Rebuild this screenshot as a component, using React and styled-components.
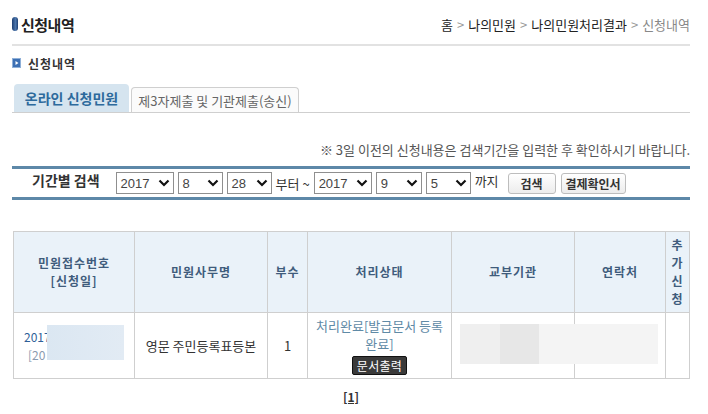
import React from 'react'
import styled, {createGlobalStyle} from 'styled-components'

const Global = createGlobalStyle`
  body {
    margin: 0;
    background: #fff;
    font-family: "Noto Sans CJK KR", "Noto Sans", sans-serif;
    font-size: 13px;
    color: #333;
  }
`

const Page = styled.div`
  width: 678px;
  padding-left: 12px;
`

const TopBar = styled.div`
  height: 46px;
  display: flex;
  align-items: center;
  justify-content: space-between;
  padding-top: 4px;
  box-sizing: border-box;
  border-bottom: 2px solid #e2e2e2;
`

const PageTitle = styled.h1`
  margin: 0;
  display: flex;
  align-items: center;
  gap: 3px;
  font-size: 15px;
  font-weight: bold;
  color: #222;
  letter-spacing: -0.5px;
`

const Pill = styled.span`
  width: 6px;
  height: 14px;
  border-radius: 3px;
  background: linear-gradient(90deg, #1d3f73, #4d77ad 60%, #1d3f73);
`

const Crumbs = styled.div`
  font-size: 13px;
  color: #222;
`

const CrumbSep = styled.span`
  color: #999;
  margin: 0 4px;
`

const CrumbLast = styled.span`
  color: #888;
`

const SectionTitle = styled.h2`
  margin: 7px 0 0;
  height: 20px;
  display: flex;
  align-items: center;
  gap: 7px;
  font-size: 12px;
  font-weight: bold;
  letter-spacing: 1px;
  color: #333;
`

const Tabs = styled.div`
  margin-top: 11px;
  height: 28px;
  display: flex;
  align-items: flex-end;
  gap: 2px;
  padding-left: 2px;
  border-bottom: 1px solid #cfcfcf;
`

const Tab = styled.div`
  box-sizing: border-box;
  display: flex;
  align-items: center;
  justify-content: center;
  width: ${p => p.$w}px;
  height: ${p => (p.$active ? 28 : 25)}px;
  border-radius: 4px 4px 0 0;
  background: ${p => (p.$active ? '#d5e4ef' : '#fbfbfb')};
  border: ${p => (p.$active ? 'none' : '1px solid #cfcfcf')};
  border-bottom: none;
  color: ${p => (p.$active ? '#2d6a9c' : '#666')};
  font-size: ${p => (p.$active ? 14 : 13)}px;
  font-weight: ${p => (p.$active ? 'bold' : 'normal')};
`

const Note = styled.p`
  margin: 28px 0 0;
  height: 18px;
  line-height: 18px;
  text-align: right;
  color: #555;
  font-size: 13px;
`

const SearchBar = styled.div`
  margin-top: 7px;
  height: 34px;
  box-sizing: border-box;
  border-top: 3px solid #5d88a8;
  border-bottom: 3px solid #5d88a8;
  display: flex;
  align-items: center;
  padding-left: 20px;
`

const SearchLabel = styled.span`
  font-size: 14px;
  font-weight: bold;
  color: #333;
  margin-right: 16px;
  padding-bottom: 6px;
`

const Select = styled.div`
  box-sizing: border-box;
  width: ${p => p.$w}px;
  height: 22px;
  border: 1px solid #8f8f8f;
  display: flex;
  align-items: center;
  justify-content: space-between;
  padding: 0 3px 0 4px;
  margin-right: 4px;
  font-family: "Liberation Sans", sans-serif;
  font-size: 13px;
  color: #444;
`

const Word = styled.span`
  font-size: 13px;
  color: #333;
  margin-right: ${p => p.$mr || 4}px;
  padding-bottom: ${p => p.$pb || 0}px;
`

const Button = styled.button`
  box-sizing: border-box;
  width: ${p => p.$w}px;
  height: 21px;
  margin-left: 5px;
  padding: 0;
  border: 1px solid #bdbdbd;
  border-radius: 3px;
  background: linear-gradient(#ffffff, #ececec);
  font-family: inherit;
  font-size: 12px;
  font-weight: bold;
  color: #333;
`

const Table = styled.table`
  margin: 31px 0 0 1px;
  width: 676px;
  border-collapse: collapse;
  table-layout: fixed;
  border: 1px solid #cfcfcf;
`

const Th = styled.th`
  height: 80px;
  padding: 0;
  border: 1px solid #cfcfcf;
  background: #eaf2f9;
  color: #3f5c7c;
  font-size: 12px;
  font-weight: bold;
  letter-spacing: 1px;
  line-height: 18px;
`

const Td = styled.td`
  position: relative;
  height: 65px;
  padding: 0 4px;
  border: 1px solid #cfcfcf;
  text-align: ${p => p.$align || 'center'};
  font-size: 13px;
  color: #333;
  line-height: 18px;
`

const Receipt = styled.div`
  font-size: 12px;
  color: ${p => p.$muted ? '#8a9bb0' : '#2f5f98'};
  padding-left: ${p => p.$indent || 6}px;
`

const Mask = styled.div`
  position: absolute;
  left: ${p => p.$l}px;
  top: ${p => p.$t}px;
  width: ${p => p.$w}px;
  height: ${p => p.$h}px;
  background: ${p => p.$bg};
`

const Status = styled.div`
  color: #5f8aa6;
`

const PrintButton = styled.span`
  display: inline-block;
  margin-top: 3px;
  padding: 0 4px;
  height: 17px;
  line-height: 17px;
  background: #3a3a3a;
  border: 1px solid #111;
  border-radius: 2px;
  color: #fff;
  font-size: 12px;
  letter-spacing: 0.3px;
`

const Paging = styled.div`
  width: 678px;
  margin-top: 9px;
  text-align: center;
  font-weight: bold;
  text-decoration: underline;
  font-size: 12px;
  color: #333;
`

const Chevron = () => (
  <svg width="12" height="8" viewBox="0 0 12 8">
    <polyline points="1.5,1.5 6,6 10.5,1.5" fill="none" stroke="#111" strokeWidth="2.2" />
  </svg>
)

const SectionIcon = () => (
  <svg width="9" height="10" viewBox="0 0 9 10">
    <rect x="0.5" y="0.5" width="8" height="9" fill="#3d70b4" stroke="#8fb0d8" />
    <polygon points="3.5,3 6.5,5 3.5,7" fill="#fff" />
  </svg>
)

const Dropdown = ({w, value}) => (
  <Select $w={w}>
    <span>{value}</span>
    <Chevron />
  </Select>
)

const App = () => {
  return (
    <Page>
      <Global />
      <TopBar>
        <PageTitle><Pill />신청내역</PageTitle>
        <Crumbs>
          홈<CrumbSep>&gt;</CrumbSep>나의민원<CrumbSep>&gt;</CrumbSep>나의민원처리결과<CrumbSep>&gt;</CrumbSep><CrumbLast>신청내역</CrumbLast>
        </Crumbs>
      </TopBar>

      <SectionTitle><SectionIcon />신청내역</SectionTitle>

      <Tabs>
        <Tab $active $w={115}>온라인 신청민원</Tab>
        <Tab $w={168}>제3자제출 및 기관제출(송신)</Tab>
      </Tabs>

      <Note>※ 3일 이전의 신청내용은 검색기간을 입력한 후 확인하시기 바랍니다.</Note>

      <SearchBar>
        <SearchLabel>기간별 검색</SearchLabel>
        <Dropdown w={58} value="2017" />
        <Dropdown w={45} value="8" />
        <Dropdown w={45} value="28" />
        <Word>부터 ~</Word>
        <Dropdown w={58} value="2017" />
        <Dropdown w={46} value="9" />
        <Dropdown w={45} value="5" />
        <Word $pb={5}>까지</Word>
        <Button $w={48}>검색</Button>
        <Button $w={65}>결제확인서</Button>
      </SearchBar>

      <Table>
        <colgroup>
          <col style={{width: 121}} />
          <col style={{width: 133}} />
          <col style={{width: 40}} />
          <col style={{width: 144}} />
          <col style={{width: 123}} />
          <col style={{width: 91}} />
          <col style={{width: 24}} />
        </colgroup>
        <thead>
          <tr>
            <Th>민원접수번호<br />[신청일]</Th>
            <Th>민원사무명</Th>
            <Th>부수</Th>
            <Th>처리상태</Th>
            <Th>교부기관</Th>
            <Th>연락처</Th>
            <Th>추<br />가<br />신<br />청</Th>
          </tr>
        </thead>
        <tbody>
          <tr>
            <Td $align="left">
              <Receipt>2017</Receipt>
              <Receipt $muted $indent={10}>[20</Receipt>
              <Mask $l={33} $t={12} $w={77} $h={35} $bg="linear-gradient(90deg, #dbe7f2, #e2ebf4)" />
            </Td>
            <Td>영문 주민등록표등본</Td>
            <Td>1</Td>
            <Td>
              <Status>처리완료[발급문서 등록 완료]</Status>
              <PrintButton>문서출력</PrintButton>
            </Td>
            <Td>
              <Mask $l={8} $t={11} $w={198} $h={40} $bg="linear-gradient(90deg, #efefef 0 20%, #e7e7e7 20% 40%, #f4f4f4 40% 100%)" />
            </Td>
            <Td />
            <Td />
          </tr>
        </tbody>
      </Table>

      <Paging>[1]</Paging>
    </Page>
  )
}

export default App
